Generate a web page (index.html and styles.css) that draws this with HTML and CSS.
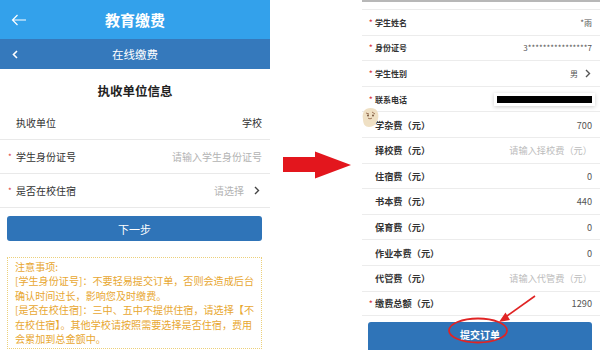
FILE: index.html
```html
<!DOCTYPE html>
<html lang="zh">
<head>
<meta charset="utf-8">
<link rel="stylesheet" href="styles.css">
</head>
<body>
<div class="page">
  <section class="left">
    <header class="hd">
      <svg class="back" width="16" height="12" viewBox="0 0 16 12"><path d="M15 6H1.5M6.5 1L1.5 6l5 5" fill="none" stroke="#fff" stroke-width="1.2"/></svg>
      <h1>教育缴费</h1>
      <span></span>
    </header>
    <div class="sub">
      <svg class="sub-back" width="6" height="9" viewBox="0 0 6 9"><path d="M5 1L1.5 4.5 5 8" fill="none" stroke="#fff" stroke-width="1.6"/></svg>
      <span class="sub-title">在线缴费</span>
      <span></span>
    </div>
    <h2 class="sec-title">执收单位信息</h2>
    <div class="row"><span class="lbl">执收单位</span><span class="val">学校</span></div>
    <div class="row"><span class="lbl"><i class="req">*</i>学生身份证号</span><span class="ph">请输入学生身份证号</span></div>
    <div class="row"><span class="lbl"><i class="req">*</i>是否在校住宿</span><span class="ph">请选择</span><svg class="chev" width="6" height="9" viewBox="0 0 6 9"><path d="M1 1l3.5 3.5L1 8" fill="none" stroke="#444" stroke-width="1.4"/></svg></div>
    <button class="btn">下一步</button>
    <div class="notice">注意事项:<br>[学生身份证号]：不要轻易提交订单，否则会造成后台<br>确认时间过长，影响您及时缴费。<br>[是否在校住宿]：三中、五中不提供住宿，请选择【不<br>在校住宿】。其他学校请按照需要选择是否住宿，费用<br>会累加到总金额中。</div>
  </section>

  <div class="arrow-col">
    <svg width="68" height="28" viewBox="0 0 68 28"><polygon points="0,6 32,6 32,0.5 68,14 32,27.5 32,21 0,21" fill="#e3161d"/></svg>
  </div>

  <section class="right">
    <div class="r-top"></div>
    <div class="rrow small"><span class="lbl"><i class="req">*</i>学生姓名</span><span class="val">*雨</span></div>
    <div class="rrow small"><span class="lbl"><i class="req">*</i>身份证号</span><span class="val">3****************7</span></div>
    <div class="rrow small"><span class="lbl"><i class="req">*</i>学生性别</span><span class="val">男</span><svg class="rchev" width="6" height="9" viewBox="0 0 6 9"><path d="M1 1l3.5 3.5L1 8" fill="none" stroke="#555" stroke-width="1.4"/></svg></div>
    <div class="rrow small"><span class="lbl"><i class="req">*</i>联系电话</span><span class="mask"></span></div>
    <div class="rrow"><span class="lbl">学杂费（元）</span><span class="val">700</span></div>
    <div class="rrow"><span class="lbl">择校费（元）</span><span class="ph">请输入择校费（元）</span></div>
    <div class="rrow"><span class="lbl">住宿费（元）</span><span class="val">0</span></div>
    <div class="rrow"><span class="lbl">书本费（元）</span><span class="val">440</span></div>
    <div class="rrow"><span class="lbl">保育费（元）</span><span class="val">0</span></div>
    <div class="rrow"><span class="lbl">作业本费（元）</span><span class="val">0</span></div>
    <div class="rrow"><span class="lbl">代管费（元）</span><span class="ph">请输入代管费（元）</span></div>
    <div class="rrow last"><span class="lbl"><i class="req">*</i>缴费总额（元）</span><span class="val">1290</span></div>
    <button class="rbtn">提交订单</button>

    <svg class="sticker" width="18" height="22" viewBox="0 0 18 22">
      <path d="M2 4C4 1 9 0 13 2c3 2 4 6 3 10-1 5-5 8-9 8S1 17 1 12C0 9 1 6 2 4z" fill="#efe0c4"/>
      <path d="M4 6l3 1M10 5l3 2M6 11c1 1 3 1 4 0" fill="none" stroke="#a0785a" stroke-width="1"/>
      <circle cx="6" cy="8.5" r="0.9" fill="#6b4a33"/><circle cx="11" cy="8.5" r="0.9" fill="#6b4a33"/>
    </svg>

    <svg class="marks" width="238" height="350" viewBox="0 0 238 350">
      <ellipse cx="116" cy="330.5" rx="29" ry="12" fill="none" stroke="#e02424" stroke-width="1.8"/>
      <path d="M173 296L145 316" stroke="#e02424" stroke-width="1.6" fill="none"/>
      <polygon points="137,322 148,320 143.5,312.5" fill="#e02424"/>
    </svg>
  </section>
</div>
</body>
</html>
```

FILE: styles.css
```css
* { box-sizing: border-box; }
html, body { margin: 0; padding: 0; background: #fff; }
body {
  width: 600px;
  height: 350px;
  overflow: hidden;
  font-family: "Noto Sans CJK SC", "Noto Sans", sans-serif;
}
.page { display: flex; width: 600px; height: 350px; }

/* left phone */
.left { width: 270px; flex: none; background: #fff; }
.hd {
  height: 39px;
  background: #33a1eb;
  display: grid;
  grid-template-columns: 40px 1fr 40px;
  align-items: center;
}
.back { margin-left: 11px; }
.hd h1 {
  margin: 0;
  font-size: 15px;
  font-weight: 700;
  color: #fff;
  text-align: center;
  line-height: 20px;
}
.sub {
  height: 30px;
  background: #3579bc;
  display: grid;
  grid-template-columns: 40px 1fr 40px;
  align-items: center;
}
.sub-back { margin-left: 12px; }
.sub-title { text-align: center; color: #fff; font-size: 11.5px; }
.sec-title {
  margin: 0;
  height: 37px;
  padding-top: 14px;
  line-height: 16px;
  font-size: 12.5px;
  font-weight: 700;
  color: #222;
  text-align: center;
}
.row {
  height: 34px;
  border-bottom: 1px solid #e9e9e9;
  display: flex;
  align-items: center;
  padding: 0 8px 0 16px;
  font-size: 10px;
  color: #333;
}
.row .val, .row .ph { margin-left: auto; }
.row .ph { color: #b3b3b3; }
.chev { margin-left: 10px; margin-right: 2px; }
.req {
  font-style: normal;
  color: #d9363e;
  display: inline-block;
  width: 8px;
  margin-left: -8px;
  font-size: 8px;
  vertical-align: 1px;
}
.btn {
  display: block;
  margin: 8px 8px 0 7px;
  width: 255px;
  height: 25px;
  border: 0;
  border-radius: 3px;
  background: #2f74b8;
  color: #fff;
  font-family: inherit;
  font-size: 11px;
  padding: 0;
}
.notice {
  margin: 16px 8px 0 7px;
  border: 1px dotted #ecd07a;
  padding: 2px 7px;
  font-size: 10.1px;
  line-height: 14.4px;
  color: #e8a731;
  white-space: nowrap;
}

/* middle arrow */
.arrow-col {
  width: 92px;
  flex: none;
  display: flex;
  justify-content: center;
  padding-top: 151px;
  padding-left: 2px;
}

/* right phone */
.right {
  position: relative;
  width: 238px;
  flex: none;
  background: #fff;
}
.r-top { height: 2px; background: #b8b8b8; margin-bottom: 7px; }
.rrow {
  height: 25.6px;
  border-top: 1px solid #ececec;
  display: flex;
  align-items: center;
  padding: 0 8px 0 13px;
  font-size: 9.2px;
  color: #444;
}
.rrow.small { font-size: 8px; }
.rrow.last { border-bottom: 1px solid #ececec; }
.rrow .lbl { color: #333; font-weight: 600; }
.rrow .req { width: 6px; margin-left: -6px; font-size: 7px; }
.rrow .val, .rrow .ph, .rrow .mask { margin-left: auto; }
.rrow .val { color: #555; }
.rrow .ph { color: #bcbcbc; }
.rchev { margin-left: 7px; margin-right: 1px; }
.mask {
  width: 95px;
  height: 7px;
  background: #000;
  box-shadow: 0 0 0 3px #fff, 0 1px 4px 3px rgba(0,0,0,0.2);
}
.rbtn {
  display: block;
  margin: 6px 8px 0 6px;
  width: 224px;
  height: 30px;
  border: 0;
  border-radius: 3px 3px 0 0;
  background: #2f74b8;
  color: #fff;
  font-family: inherit;
  font-size: 10px;
  font-weight: 700;
  padding: 0 0 6px 0;
}
.sticker { position: absolute; left: 0; top: 107px; }
.marks { position: absolute; left: 0; top: 0; pointer-events: none; }
```
